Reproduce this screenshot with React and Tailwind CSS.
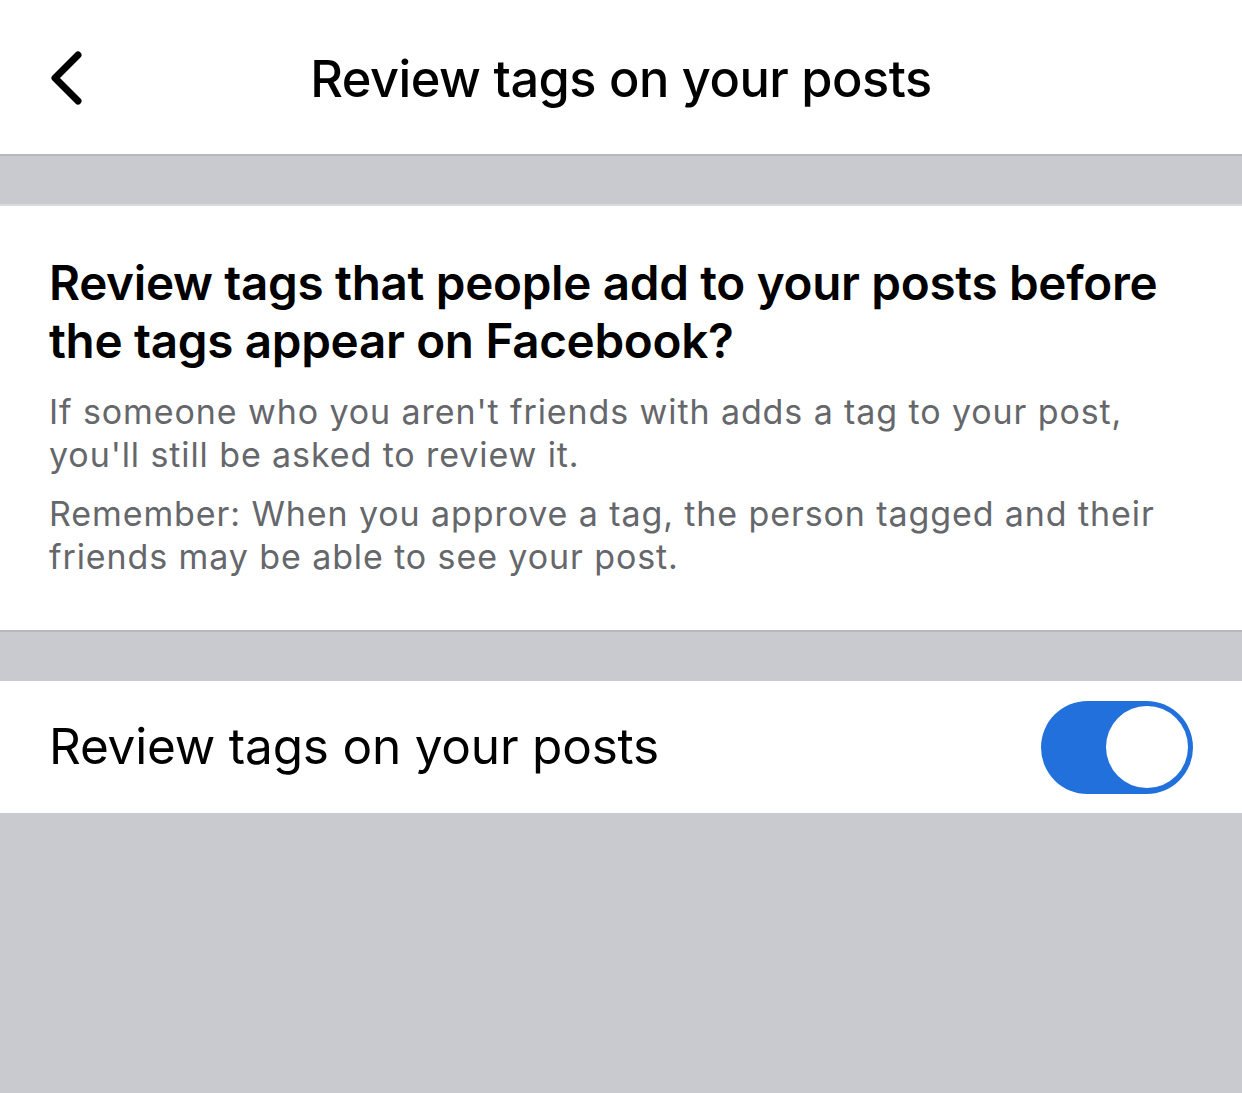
const font = { fontFamily: 'Inter, "Noto Sans", sans-serif' };

function BackChevron() {
  return (
    <svg width="40" height="56" viewBox="0 0 40 56" fill="none">
      <polyline
        points="30,5 7,28 30,51"
        stroke="#000"
        strokeWidth="7"
        strokeLinecap="round"
        strokeLinejoin="round"
      />
    </svg>
  );
}

function Toggle() {
  return (
    <div className="w-[152px] h-[93px] rounded-full bg-[#2270db] flex items-center justify-end pr-[5px]">
      <div className="w-[82px] h-[82px] rounded-full bg-white" />
    </div>
  );
}

export default function App() {
  return (
    <div className="w-[1242px] h-[1093px] bg-[#c9cacf] flex flex-col" style={font}>
      {/* Header */}
      <div className="h-[156px] bg-white border-b-2 border-[#b7b8bc] flex items-center relative">
        <div className="absolute left-[48px] top-[50px]">
          <BackChevron />
        </div>
        <h1 className="w-full text-center text-[50.5px] font-medium tracking-[-0.5px] text-black pt-[4px]">
          Review tags on your posts
        </h1>
      </div>

      <div className="h-[48px]" />

      {/* Description */}
      <div className="bg-white border-t-2 border-[#dadbde] border-b-2 border-b-[#b7b8bc] px-[49px] pt-[48px] pb-[52px]">
        <h2 className="text-[47.6px] leading-[58px] font-semibold text-black tracking-[-0.3px]">
          Review tags that people add to your posts before the tags appear on Facebook?
        </h2>
        <p className="mt-[20px] text-[34px] leading-[43px] text-[#65676b] tracking-[0.9px]">
          If someone who you aren't friends with adds a tag to your post, you'll still be asked to review it.
        </p>
        <p className="mt-[16px] text-[34px] leading-[43px] text-[#65676b] tracking-[0.9px]">
          Remember: When you approve a tag, the person tagged and their friends may be able to see your post.
        </p>
      </div>

      <div className="h-[49px]" />

      {/* Toggle row */}
      <div className="h-[132px] bg-white flex items-center justify-between pl-[49px] pr-[49px]">
        <span className="text-[49.5px] text-black tracking-[-0.2px] pb-[2px]">Review tags on your posts</span>
        <Toggle />
      </div>
    </div>
  );
}
